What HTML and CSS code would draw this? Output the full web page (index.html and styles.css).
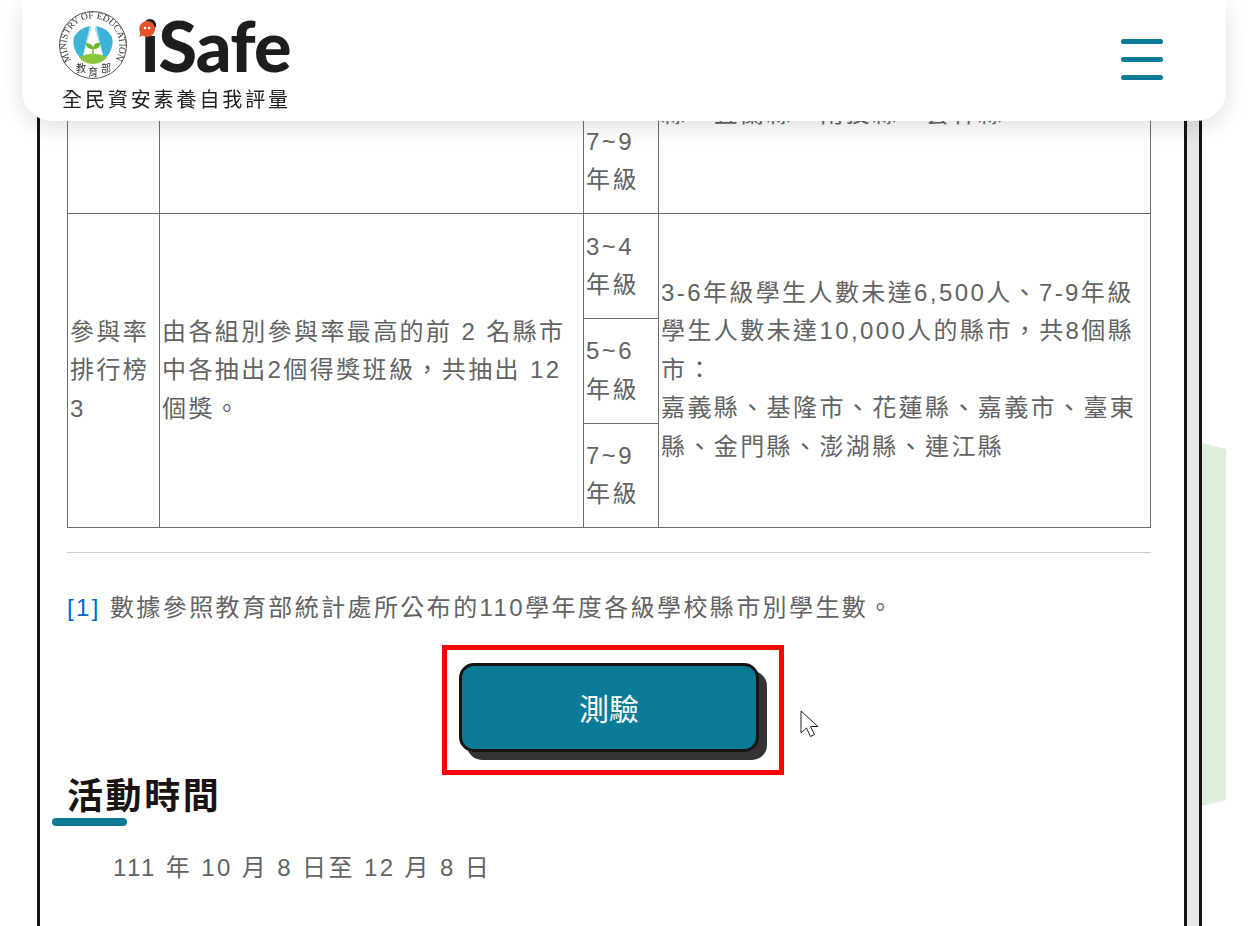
FILE: index.html
```html
<!DOCTYPE html>
<html lang="zh-Hant">
<head>
  <meta charset="UTF-8">
  <meta name="viewport" content="width=device-width, initial-scale=1.0">
  <title>iSafe 全民資安素養自我評量</title>
  <link rel="stylesheet" href="styles.css">
</head>
<body>
  <header class="site-header">
    <a class="brand" href="#">
      <div class="brand-top">
        <svg class="seal" width="70" height="70" viewBox="0 0 70 70">
          <circle cx="35" cy="35" r="33.5" fill="#fff" stroke="#555" stroke-width="1"/>
          <path d="M32 16Q21 18 16 27Q13 39 24 50Z" fill="#3ab3d6"/>
          <path d="M38 16Q49 18 54 27Q57 39 46 50Z" fill="#3ab3d6"/>
          <path d="M32 16L24 50L27 40L33.500 18Z" fill="#a9dff0"/>
          <path d="M38 16L46 50L43 40L36.500 18Z" fill="#a9dff0"/>
          <path d="M21 47Q35 40 49 47Q44 54 35 54Q26 54 21 47Z" fill="#8cc63f"/>
          <path d="M34.300 44V39Q28.500 39 27.500 33Q33 33 35 37Q37 32 42.500 33Q42 39 35.700 39V44Z" fill="#6fb52c"/>
          <path id="sealArc" d="M13.300 50.200A26.500 26.500 0 1 1 56.700 50.200" fill="none"/>
          <text class="seal-text"><textPath href="#sealArc" textLength="114">MINISTRY OF EDUCATION</textPath></text>
          <text class="seal-cjk" x="18 30 43" y="62 66 62">教育部</text>
        </svg>
        <div class="wordmark">iSafe
          <svg class="wordmark-bubble" width="18" height="18" viewBox="0 0 18 18">
            <path d="M9 1a8 8 0 1 1-4.500 14.600L1.500 17l.8-4A8 8 0 0 1 9 1Z" fill="#e5532b"/>
            <circle cx="7" cy="8" r="1.200" fill="#fff"/>
            <circle cx="11" cy="8" r="1.200" fill="#fff"/>
          </svg>
        </div>
      </div>
      <div class="brand-sub">全民資安素養自我評量</div>
    </a>
    <button class="menu-toggle" type="button" aria-label="menu">
      <span></span><span></span><span></span>
    </button>
  </header>

  <div class="blob"></div>

  <div class="sheet-wrap">
    <main class="sheet">
      <table class="rule-table">
        <colgroup>
          <col class="col-name"><col class="col-rule"><col class="col-grade"><col class="col-note">
        </colgroup>
        <tr class="row-clipped">
          <td></td>
          <td></td>
          <td class="grade-clipped">7~9<br>年級</td>
          <td class="note-clipped">縣、宜蘭縣、南投縣、雲林縣</td>
        </tr>
        <tr>
          <td rowspan="3">參與率排行榜3</td>
          <td rowspan="3">由各組別參與率最高的前 2 名縣市中各抽出2個得獎班級，共抽出 12 個獎。</td>
          <td class="grade">3~4<br>年級</td>
          <td rowspan="3" class="note">3-6年級學生人數未達6,500人、7-9年級學生人數未達10,000人的縣市，共8個縣市：<br>嘉義縣、基隆市、花蓮縣、嘉義市、臺東縣、金門縣、澎湖縣、連江縣</td>
        </tr>
        <tr><td class="grade">5~6<br>年級</td></tr>
        <tr><td class="grade">7~9<br>年級</td></tr>
      </table>

      <hr class="divider">
      <p class="footnote"><a href="#">[1]</a> 數據參照教育部統計處所公布的110學年度各級學校縣市別學生數。</p>

      <div class="quiz-box">
        <button class="quiz-btn" type="button">測驗</button>
      </div>

      <h2 class="section-title">活動時間</h2>
      <p class="section-text">111 年 10 月 8 日至 12 月 8 日</p>
    </main>
  </div>

  <svg class="cursor" width="20" height="28" viewBox="0 0 20 28">
    <path d="M1 1V23L6.500 18L10.500 26.500L14.500 24.500L10.500 16.500H18Z" fill="#fff" stroke="#222" stroke-width="1"/>
  </svg>
</body>
</html>
```

FILE: styles.css
```css
:root {
  --teal: #0a7a96;
  --ink: #1a1311;
  --text-color: #636363;
  --cell-line: #6b6b6b;
}

html, body {
  height: 926px;
  overflow: hidden;
}

body {
  margin: 0;
  background-color: #fff;
  color: var(--text-color);
  font-family: "Liberation Sans", "Noto Sans CJK TC", sans-serif;
  font-size: 24px;
  line-height: 1.6;
  letter-spacing: .1em;
}

/* header */
.site-header {
  position: fixed;
  top: 0;
  left: 22px;
  z-index: 10;
  box-sizing: border-box;
  width: 1204px;
  height: 121px;
  padding: 10px 63px 0 36px;
  display: flex;
  justify-content: space-between;
  background-color: #fff;
  border-radius: 0 0 30px 30px;
  box-shadow: 0 6px 22px rgba(0,0,0,.13);
}

.brand {
  display: block;
  color: #222;
  text-decoration: none;
}

.brand-top {
  display: flex;
  height: 70px;
}

.seal-text {
  font-family: "Liberation Serif", serif;
  font-size: 9.5px;
  letter-spacing: 0;
  fill: #333;
}

.seal-cjk {
  font-family: "Noto Sans CJK TC", sans-serif;
  font-size: 10px;
  letter-spacing: 0;
  fill: #333;
}

.wordmark {
  position: relative;
  margin-left: 13px;
  font-family: "Lato", sans-serif;
  font-size: 70px;
  font-weight: 900;
  line-height: 70px;
  letter-spacing: -.01em;
  color: #1d1d1d;
}

.wordmark-bubble {
  position: absolute;
  top: 10px;
  left: -3px;
}

.brand-sub {
  margin: 6px 0 0 4px;
  font-family: "Noto Sans CJK TC", sans-serif;
  font-size: 20px;
  line-height: 26px;
  letter-spacing: 2.9px;
}

.menu-toggle {
  display: flex;
  flex-direction: column;
  gap: 13px;
  width: 42px;
  margin-top: 29px;
  padding: 0;
  height: 41px;
  border: none;
  background: none;
}

.menu-toggle span {
  display: block;
  height: 5px;
  background-color: var(--teal);
  border-radius: 3px;
}

/* decorative green shape to the right of the sheet */
.blob {
  position: absolute;
  top: 443px;
  left: 1202px;
  width: 24px;
  height: 363px;
  background-color: #deeedd;
  clip-path: polygon(0 0, 100% 6px, 100% 357px, 0 100%);
}

/* main sheet */
.sheet-wrap {
  box-sizing: border-box;
  width: 1165px;
  height: 926px;
  margin-left: 37px;
  background-color: #e6e8e8;
  border-right: 3px solid var(--ink);
}

.sheet {
  box-sizing: border-box;
  width: 1150px;
  height: 926px;
  padding-left: 27px;
  background-color: #fff;
  border-left: 3px solid var(--ink);
  border-right: 3px solid var(--ink);
}

.rule-table {
  width: 1083px;
  table-layout: fixed;
  border-collapse: collapse;
}

.rule-table td {
  padding: 0 2px;
  border: 1px solid var(--cell-line);
  vertical-align: middle;
}

.col-name { width: 92px; }
.col-rule { width: 424px; }
.col-grade { width: 75px; }
.col-note { width: 492px; }

.row-clipped td {
  height: 213px;
  box-sizing: border-box;
  vertical-align: top;
}

.rule-table .grade-clipped { padding-top: 122px; }
.rule-table .note-clipped { padding-top: 94px; }

.rule-table .grade {
  padding-top: 13.5px;
  padding-bottom: 13.5px;
}

.rule-table .note {
  vertical-align: top;
  padding-top: 60px;
}

.divider {
  margin: 24px 0 36px;
  width: 1084px;
  height: 1px;
  border: none;
  background-color: #ccc;
}

.footnote {
  margin: 0;
}

.footnote a {
  color: #0066cc;
  text-decoration: none;
}

.quiz-box {
  box-sizing: border-box;
  width: 342px;
  height: 130px;
  margin: 17px 0 0 375px;
  padding: 13px 0 0 12px;
  border: 5px solid #f00;
}

.quiz-btn {
  display: block;
  box-sizing: border-box;
  width: 300px;
  height: 89px;
  padding: 0;
  color: #fff;
  font-family: "Noto Sans CJK TC", sans-serif;
  font-size: 30px;
  font-weight: 400;
  letter-spacing: 0;
  background-color: var(--teal);
  border: 3px solid var(--ink);
  border-radius: 15px;
  box-shadow: 8px 8px 0 #333;
}

.section-title {
  position: relative;
  width: max-content;
  margin: -4px 0 0;
  color: var(--ink);
  font-family: "Noto Sans CJK TC", sans-serif;
  font-size: 36px;
  font-weight: 700;
  line-height: 44px;
  letter-spacing: 2.6px;
}

.section-title::after {
  content: "";
  position: absolute;
  left: -15px;
  bottom: -11px;
  width: 75px;
  height: 8px;
  background-color: var(--teal);
  border-radius: 4px;
}

.section-text {
  margin: 34px 0 0 46px;
}

.cursor {
  position: absolute;
  top: 710px;
  left: 800px;
}
```
